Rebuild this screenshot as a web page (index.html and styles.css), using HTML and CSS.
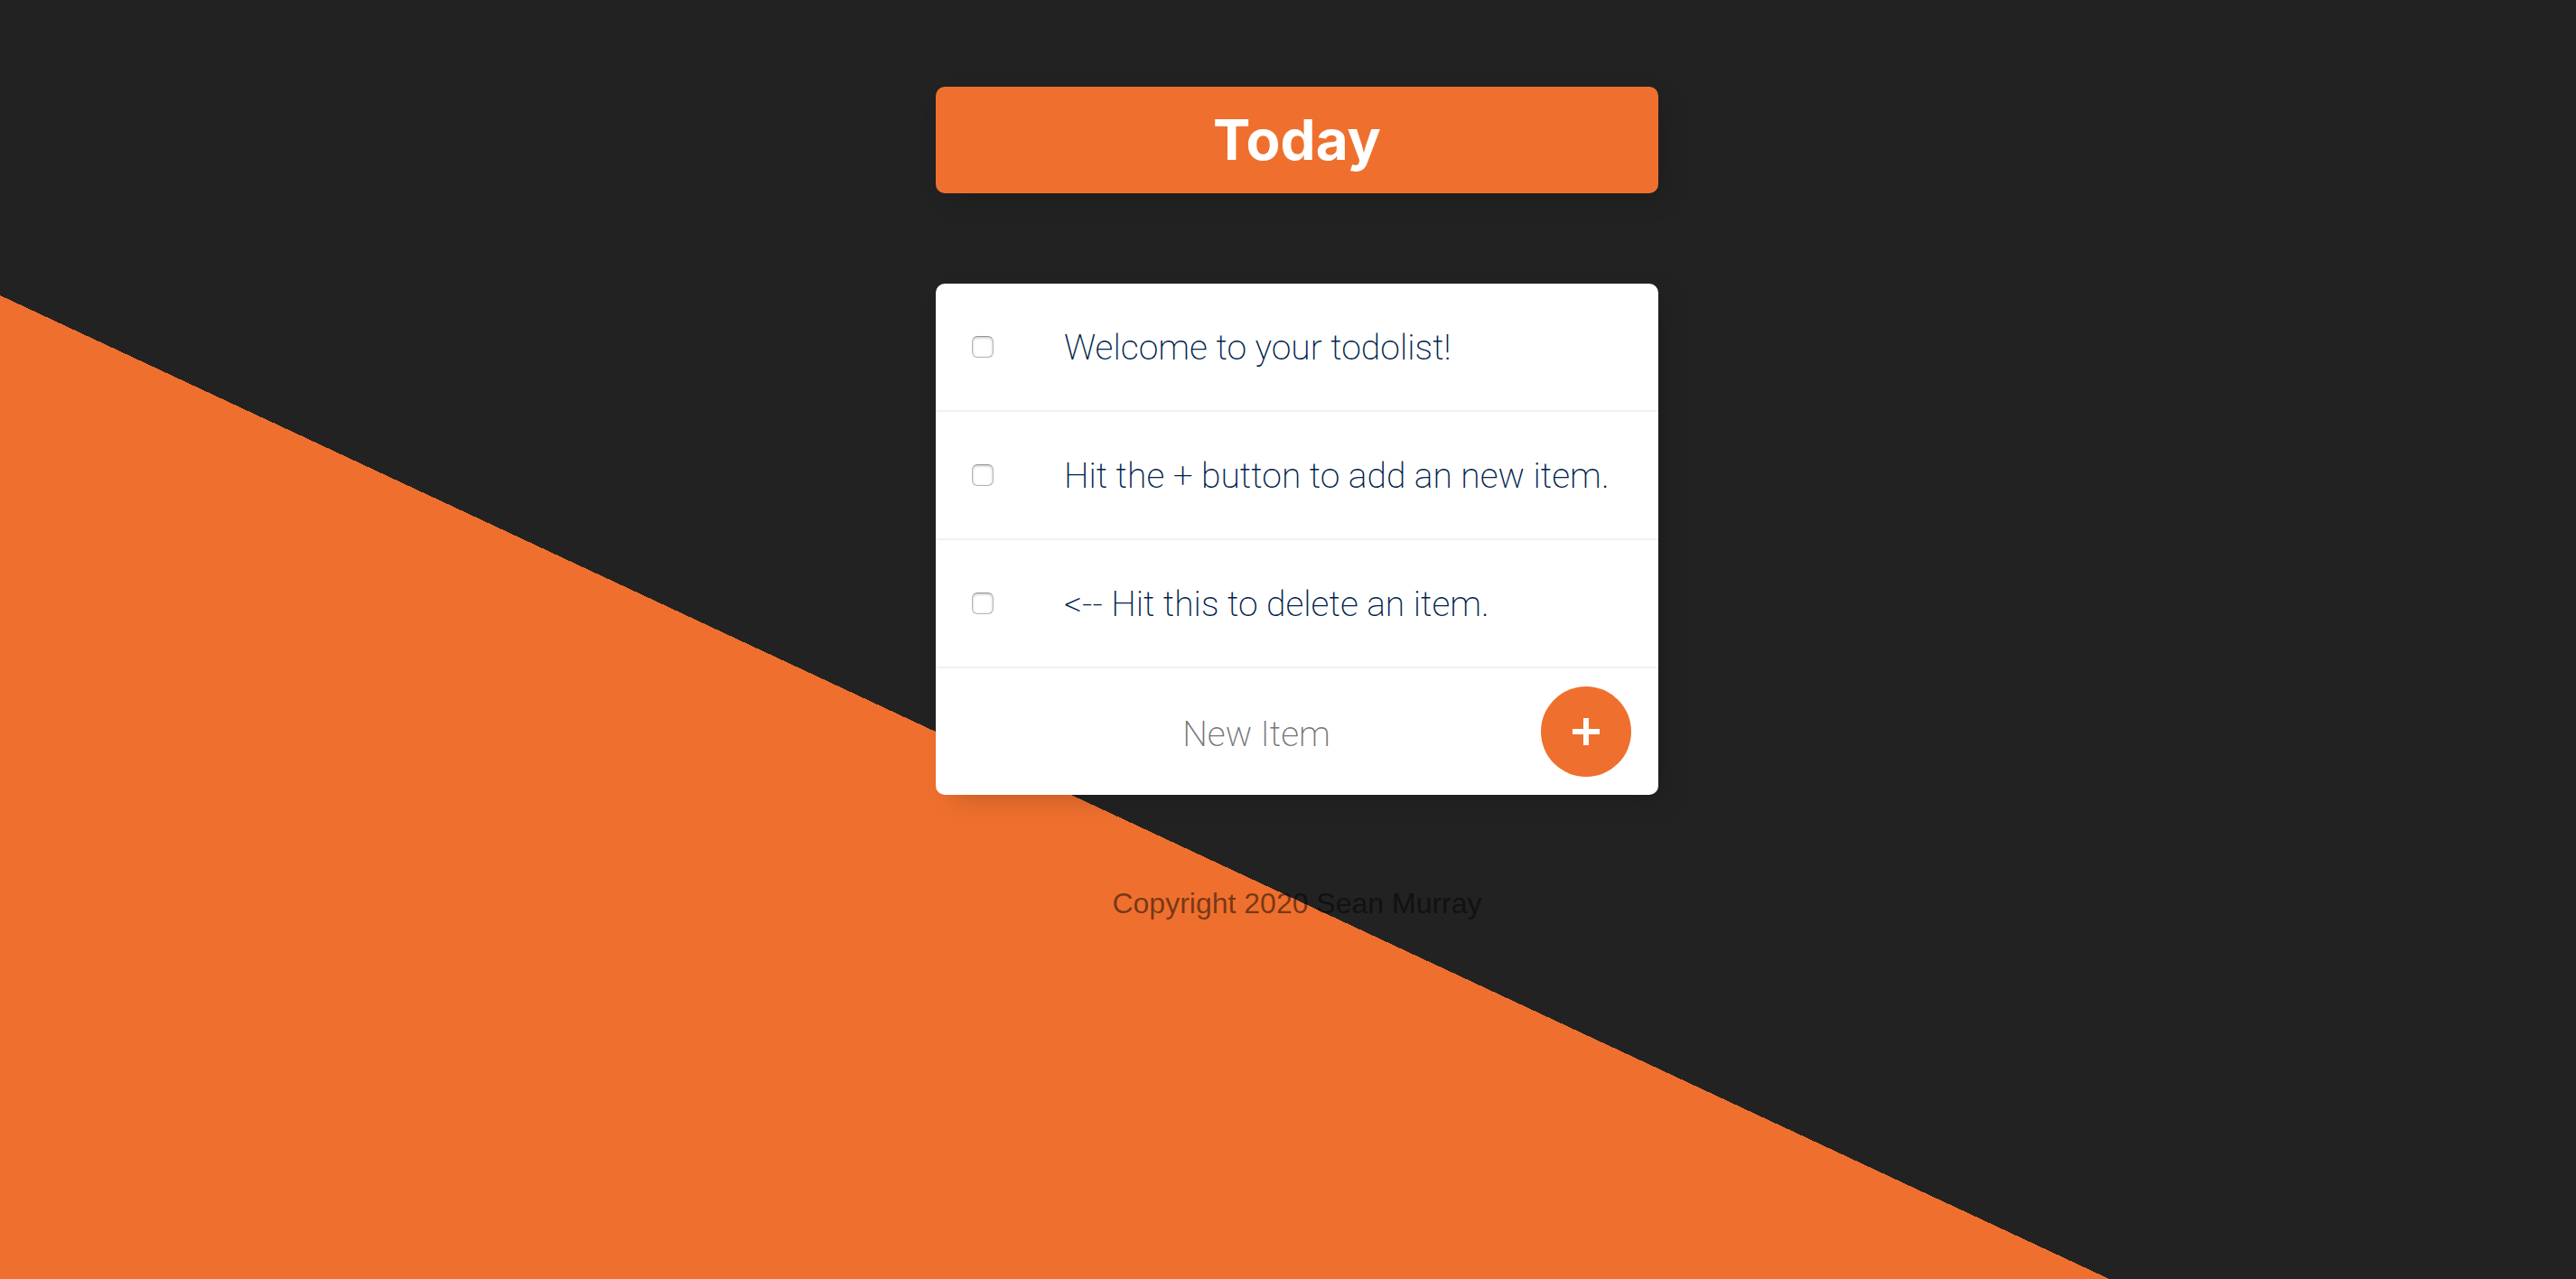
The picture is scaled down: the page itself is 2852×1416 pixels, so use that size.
FILE: index.html
```
<!DOCTYPE html>
<html lang="en">
<head>
<meta charset="utf-8">
<meta name="viewport" content="width=device-width, initial-scale=1">
<title>Todo List</title>
<link rel="stylesheet" href="styles.css">
</head>
<body>
<main class="page">
  <header class="box heading">
    <h1 class="heading-title">Today</h1>
  </header>

  <section class="box list">
    <form class="item">
      <input class="item-check" type="checkbox" id="item-1" name="checkbox">
      <label class="item-text" for="item-1">Welcome to your todolist!</label>
    </form>
    <form class="item">
      <input class="item-check" type="checkbox" id="item-2" name="checkbox">
      <label class="item-text" for="item-2">Hit the + button to add an new item.</label>
    </form>
    <form class="item">
      <input class="item-check" type="checkbox" id="item-3" name="checkbox">
      <label class="item-text" for="item-3">&lt;-- Hit this to delete an item.</label>
    </form>
    <form class="item item-new">
      <input class="new-input" type="text" name="newItem" placeholder="New Item" aria-label="New Item" autocomplete="off">
      <button class="add-button" type="submit" aria-label="Add item">
        <svg class="add-icon" viewBox="0 0 30 30" aria-hidden="true"><path d="M15 0v30M0 15h30"/></svg>
      </button>
    </form>
  </section>
</main>

<footer class="footer">Copyright 2020 Sean Murray</footer>
</body>
</html>
```
FILE: styles.css
```
* {
  box-sizing: border-box;
}

html {
  min-height: 100%;
  background: linear-gradient(25deg, #ef702e 39.66%, #222 39.66%) no-repeat;
}

body {
  margin: 0;
  padding: 96px 20px 0;
  font-family: "Liberation Sans", Arial, sans-serif;
}

.page {
  display: flex;
  flex-direction: column;
  align-items: center;
  gap: 100px;
  padding-left: 20px;
}

.box {
  width: 100%;
  max-width: 800px;
  border-radius: 10px;
  background: #fff;
  box-shadow: 10px 10px 30px -10px rgba(0, 0, 0, 0.25);
}

.heading {
  padding: 20px;
  background: #ef702e;
  text-align: center;
}

.heading-title {
  margin: 0;
  color: #fff;
  font: 700 62px/78px Inter, sans-serif;
}

.item {
  display: flex;
  align-items: center;
  min-height: 142px;
  padding: 0 30px 0 40px;
  border-bottom: 2px solid #f1f1f1;
}

.item-check {
  appearance: none;
  flex: none;
  width: 24px;
  height: 24px;
  margin: 0 78px 0 0;
  border: 1px solid #b4b4b4;
  border-top-color: #949494;
  border-radius: 6px;
  background: #fff;
  box-shadow: inset 0 1px 3px rgba(0, 0, 0, 0.25);
}

.item-check:checked {
  background: #ef702e;
}

.item-text {
  padding-top: 2px;
  color: #001f4d;
  font: 200 39px/48px Roboto, sans-serif;
}

.item-new {
  min-height: 140px;
  border-bottom: 0;
}

.new-input {
  flex: 1;
  min-width: 0;
  height: 120px;
  padding: 6px 0 0;
  border: 0;
  outline: 0;
  background: transparent;
  color: #001f4d;
  font: 200 39px/48px Roboto, sans-serif;
  text-align: center;
}

.new-input::placeholder {
  color: #757575;
  opacity: 1;
}

.add-button {
  display: flex;
  align-items: center;
  justify-content: center;
  flex: none;
  width: 100px;
  height: 100px;
  padding: 0;
  border: 0;
  border-radius: 50%;
  background: #ef702e;
}

.add-icon {
  width: 30px;
  height: 30px;
  fill: none;
  stroke: #fff;
  stroke-width: 6;
}

.footer {
  padding: 100px 0 20px 20px;
  color: rgba(0, 0, 0, 0.5);
  font-size: 32px;
  line-height: 40px;
  text-align: center;
}
```
